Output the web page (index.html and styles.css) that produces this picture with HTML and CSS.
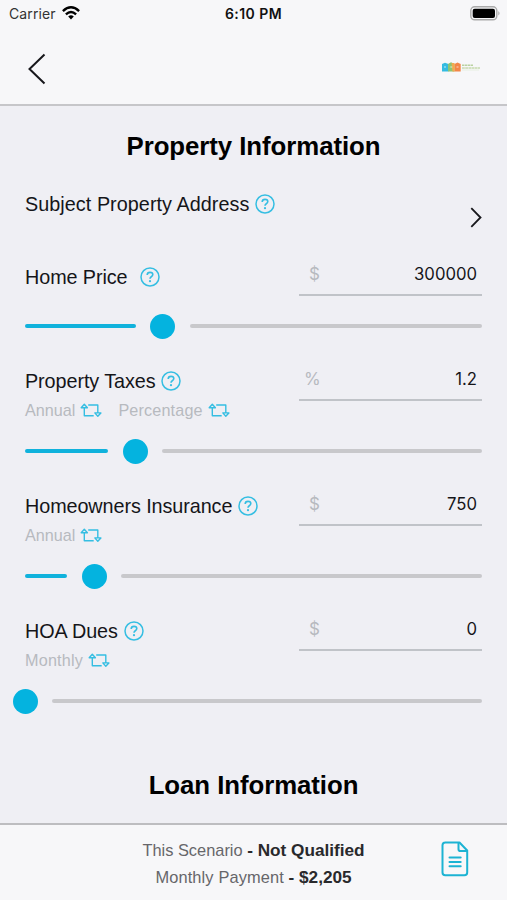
FILE: index.html
```html
<!DOCTYPE html>
<html lang="en">
<head>
<meta charset="utf-8">
<title>Property Information</title>
<link rel="stylesheet" href="styles.css">
</head>
<body>
<svg class="defs" width="0" height="0" aria-hidden="true">
  <symbol id="help" viewBox="0 0 20 20"><circle cx="10" cy="10" r="9" fill="none" stroke="currentColor" stroke-width="1.5"/><path d="M7.2 8Q7.2 5.4 10 5.4Q12.8 5.4 12.8 7.6Q12.8 8.8 11.3 9.7Q10 10.5 10 11.8" fill="none" stroke="currentColor" stroke-width="1.6"/><circle cx="10" cy="14.2" r="1.1" fill="currentColor"/></symbol>
  <symbol id="swap" viewBox="0 0 22 15"><path d="M8.2 2H17.8V9.6M13.7 12.7H4.3V4.8M1.2 4.7L4.3 1.2L7.4 4.7ZM14.8 9.9H20.9L17.8 13.2Z" fill="none" stroke="currentColor" stroke-width="1.4" stroke-linejoin="round"/></symbol>
</svg>
<div class="phone">
  <header class="top">
    <div class="status">
      <div class="carrier"><span>Carrier</span>
        <svg width="18" height="14" viewBox="0 0 18 14"><g fill="none" stroke="#000" stroke-width="2.4"><path d="M.9 5.1Q9-2.4 17.1 5.1"/><path d="M3.9 8.3Q9 3.6 14.1 8.3"/></g><path d="M6.2 10.5Q9 8.2 11.8 10.5L9 13.4Z"/></svg>
      </div>
      <div class="time">6:10 PM</div>
      <svg class="battery" width="31" height="15" viewBox="0 0 31 15"><rect x=".8" y=".8" width="26" height="13" rx="3.8" fill="#f7f7f9" stroke="#aaa" stroke-width="1.4"/><rect x="2.7" y="2.7" width="22.3" height="9.2" rx="2"/><path d="M28.3 5Q30.8 7.3 28.3 9.6Z" fill="#aaa"/></svg>
    </div>
    <div class="nav">
      <svg width="18" height="32" viewBox="0 0 18 32"><path d="M16.5 1.5L1.5 16L16.5 30.5" fill="none" stroke="#17171b" stroke-width="2"/></svg>
      <div class="brand">
        <svg width="19" height="10" viewBox="0 0 19 10"><path d="M0 2L3 .8L6.5 2V9.5H0Z" fill="#20b5df"/><path d="M6 2L9 .3L12.5 2V9.5H6Z" fill="#83bf65"/><path d="M12.5 2L15.5 .5L18.7 2V9.5H12.5Z" fill="#f37a34"/><path d="M9.5 1H12.5V9.5H10.5Z" fill="#f2a23c"/><g fill="#fff" opacity=".35"><path d="M2 4h2v2H2zM8.3 4h2v2h-2zM14.5 4h2v2h-2z"/></g></svg>
        <svg width="18" height="7" viewBox="0 0 18 7"><path d="M0 1.3H11" stroke="#b4cf98" stroke-width="1.5" stroke-dasharray="2.4 .5"/><path d="M0 4H18" stroke="#c3d8a8" stroke-width="1.7" stroke-dasharray="2.8 .4"/><path d="M0 6H17" stroke="#e4eedb" stroke-width=".8"/></svg>
      </div>
    </div>
  </header>
  <main>
    <h1 class="first">Property Information</h1>
    <section class="address">
      <div class="label"><span class="loose">Subject Property Address</span><svg class="help"><use href="#help"/></svg></div>
      <svg class="go" width="12" height="21" viewBox="0 0 12 21"><path d="M1.3 1.2L10.5 10.5L1.3 19.8" fill="none" stroke="#17171b" stroke-width="1.8"/></svg>
    </section>
    <section class="item price">
      <div class="row"><div class="label wide"><span>Home Price</span><svg class="help"><use href="#help"/></svg></div><div class="field"><span class="unit">$</span><span>300000</span></div></div>
      <div class="slider"><i class="done" style="width:110.5px"></i><i class="thumb"></i><i class="rest"></i></div>
    </section>
    <section class="item">
      <div class="row"><div><div class="label"><span>Property Taxes</span><svg class="help"><use href="#help"/></svg></div><div class="modes"><span>Annual</span><svg><use href="#swap"/></svg><span class="second">Percentage</span><svg><use href="#swap"/></svg></div></div><div class="field"><span class="unit percent">%</span><span>1.2</span></div></div>
      <div class="slider"><i class="done" style="width:83px"></i><i class="thumb"></i><i class="rest"></i></div>
    </section>
    <section class="item">
      <div class="row"><div><div class="label"><span>Homeowners Insurance</span><svg class="help"><use href="#help"/></svg></div><div class="modes"><span>Annual</span><svg><use href="#swap"/></svg></div></div><div class="field"><span class="unit">$</span><span>750</span></div></div>
      <div class="slider"><i class="done" style="width:42px"></i><i class="thumb"></i><i class="rest"></i></div>
    </section>
    <section class="item">
      <div class="row"><div><div class="label"><span>HOA Dues</span><svg class="help"><use href="#help"/></svg></div><div class="modes"><span class="monthly">Monthly</span><svg><use href="#swap"/></svg></div></div><div class="field"><span class="unit">$</span><span>0</span></div></div>
      <div class="slider empty"><i class="thumb"></i><i class="rest"></i></div>
    </section>
    <h1 class="loan">Loan Information</h1>
  </main>
  <footer>
    <div class="summary">
      <p>This Scenario <b>- Not Qualified</b></p>
      <p><span class="payment">Monthly Payment</span> <b>- $2,205</b></p>
    </div>
    <svg class="doc" width="28" height="36" viewBox="0 0 28 36"><g fill="none" stroke="#1cb3d3" stroke-width="2" stroke-linejoin="round" stroke-linecap="round"><path d="M4 1.5H18.5L26.2 9.5V31.5Q26.2 34.3 23.4 34.3H4.3Q1.5 34.3 1.5 31.5V4.3Q1.5 1.5 4.3 1.5"/><path d="M17.5 2V8.2Q17.5 10 19.3 10H25.7"/><path d="M8.5 16.5H19.7M8.5 20.9H19.7M8.5 25.3H19.7"/></g></svg>
  </footer>
</div>
</body>
</html>
```
FILE: styles.css
```css
* { box-sizing: border-box; }
body { margin: 0; background: #efeff4; font-family: "Liberation Sans", Arial, sans-serif; color: #151519; }
svg { display: block; flex: none; }
.defs { position: absolute; }
.phone { width: 507px; height: 900px; display: flex; flex-direction: column; overflow: hidden; }
.top { height: 106px; background: #f7f7f9; border-bottom: 2px solid #c6c6c9; flex: none; }
.status { display: grid; grid-template-columns: 1fr auto 1fr; align-items: center; height: 27px; padding: 0 6px 0 9px; font-family: Inter, sans-serif; }
.carrier { display: flex; align-items: center; gap: 6px; font-size: 14px; color: #333; letter-spacing: .1px; }
.carrier svg { margin-top: -1px; }
.time { font-size: 14px; font-weight: 600; letter-spacing: .45px; color: #111; margin-left: -3px; }
.battery { justify-self: end; }
.nav { display: flex; align-items: center; justify-content: space-between; height: 77px; padding: 6px 27px 0 28px; }
.brand { display: flex; align-items: center; gap: 1px; margin-top: -3px; opacity: .9; }
main { flex: 1; padding: 0 25px; }
h1 { margin: 0; text-align: center; font-size: 25.8px; line-height: 32px; letter-spacing: -.06px; color: #000; }
.first { margin-top: 24px; }
.address { display: flex; justify-content: space-between; height: 76px; padding-top: 29px; }
.go { margin-top: 16px; }
.label { display: flex; align-items: center; gap: 6px; height: 26px; font-size: 19.8px; letter-spacing: -.08px; white-space: nowrap; }
.label.wide { gap: 12px; }
.label .loose { letter-spacing: .05px; }
.help { width: 20px; height: 20px; color: #35bee2; margin-top: -1px; }
.item { height: 125.2px; }
.item .row { display: flex; justify-content: space-between; height: 69.5px; }
.price { height: 130.5px; padding-top: 26px; }
.price .row { height: 49px; }
.field { display: flex; justify-content: space-between; width: 183px; height: 33px; margin-top: -1px; padding: 0 5px 9px 10px; align-items: center; border-bottom: 2px solid #c0c3c8; font-family: Inter, sans-serif; font-size: 16.7px; }
.unit { color: #b7babf; font-size: 17px; }
.unit.percent { margin-left: -5px; }
.modes { display: flex; align-items: center; gap: 5px; height: 20px; margin-top: 6px; color: #b7babf; font-size: 16.2px; }
.modes svg { width: 22px; height: 15px; color: #35bee2; margin-top: -1px; }
.modes .second { margin-left: 11px; letter-spacing: .15px; }
.modes .monthly { letter-spacing: .2px; }
.slider { display: flex; align-items: center; height: 26px; }
.done, .rest { height: 4px; border-radius: 2px; }
.done { background: #10b2dc; }
.rest { flex: 1; background: #c8c8cb; }
.thumb { width: 25px; height: 25px; margin: 0 14.5px; border-radius: 50%; background: #04b3df; }
.empty .thumb { margin-left: -12.5px; }
.loan { margin-top: 25px; }
footer { flex: none; height: 77px; border-top: 2px solid #bdbdc0; background: #f7f7f9; position: relative; }
.summary { padding-top: 12px; text-align: center; }
.summary p { margin: 0; height: 27px; line-height: 27px; font-size: 16.4px; color: #66666a; }
.summary b { color: #29292c; font-size: 17.2px; }
.payment { letter-spacing: .13px; }
.doc { position: absolute; left: 441px; top: 16px; }
```
